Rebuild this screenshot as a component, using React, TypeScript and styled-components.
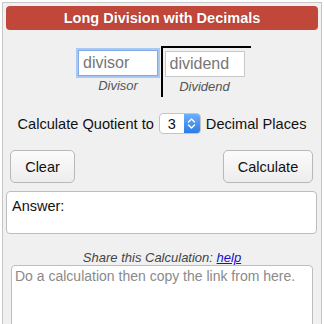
import React from "react";
import styled, { createGlobalStyle } from "styled-components";

const GlobalStyle = createGlobalStyle`
  html, body {
    margin: 0;
    padding: 0;
    background: #ffffff;
    font-family: "Liberation Sans", Arial, Helvetica, sans-serif;
  }
  * { box-sizing: border-box; }
`;

const Panel = styled.div`
  margin: 2px 0 0 2px;
  width: 320px;
  height: 330px;
  border: 1px solid #c6c6c6;
  background: #f0f0f0;
  display: flex;
  flex-direction: column;
  padding: 3px 3px 0 3px;
`;

const Header = styled.div`
  height: 26px;
  border-radius: 4px;
  background: #c0473a;
  color: #ffffff;
  font-weight: bold;
  font-size: 14.5px;
  display: flex;
  align-items: center;
  justify-content: center;
  text-shadow: 0 0 1px rgba(0, 0, 0, 0.25);
`;

const DivisionRow = styled.div`
  display: flex;
  justify-content: center;
  margin-top: 16px;
  padding-left: 2px;
`;

const DivisorCol = styled.div`
  display: flex;
  flex-direction: column;
  align-items: center;
  width: 85px;
  padding-top: 4px;
`;

const DividendCol = styled.div`
  display: flex;
  flex-direction: column;
  align-items: center;
  width: 90px;
  height: 51px;
  border-top: 2px solid #000;
  border-left: 2px solid #000;
  padding: 3px 4px 0 0;
`;

const NumberInput = styled.input<{ $focused?: boolean }>`
  width: 80px;
  height: 26px;
  border: 1px solid ${(p) => (p.$focused ? "#7fa9e2" : "#c8c8c8")};
  box-shadow: ${(p) => (p.$focused ? "0 0 0 2px #a9c9f2" : "none")};
  background: #fff;
  font-family: "Liberation Sans", Arial, sans-serif;
  font-size: 16px;
  padding: 0 4px;
  outline: none;
  &::placeholder { color: #767676; }
`;

const InputLabel = styled.div`
  font-style: italic;
  font-size: 13px;
  color: #555;
  line-height: 15px;
  margin-top: 2px;
`;

const QuotientRow = styled.div`
  display: flex;
  justify-content: center;
  align-items: center;
  gap: 5px;
  margin-top: 16px;
  height: 21px;
  font-size: 14.6px;
  color: #111;
`;

const Stepper = styled.div`
  display: flex;
  width: 42px;
  height: 21px;
  border: 1px solid #c4c4c4;
  border-radius: 4px;
  overflow: hidden;
  background: #fff;
`;

const StepperValue = styled.div`
  flex: 1;
  display: flex;
  align-items: center;
  justify-content: center;
  font-size: 14.5px;
`;

const StepperArrows = styled.div`
  width: 16px;
  background: linear-gradient(#6cb0fb, #2c7ce6);
  display: flex;
  align-items: center;
  justify-content: center;
`;

const ButtonRow = styled.div`
  display: flex;
  justify-content: space-between;
  margin-top: 16px;
  padding: 0 5px 0 4px;
`;

const Button = styled.button<{ $width: number }>`
  width: ${(p) => p.$width}px;
  height: 33px;
  border: 1px solid #b8b8b8;
  border-radius: 5px;
  background: linear-gradient(#fbfbfb, #ededed);
  font-family: "Liberation Sans", Arial, sans-serif;
  font-size: 14.5px;
  color: #111;
  padding: 0;
`;

const AnswerBox = styled.div`
  margin-top: 8px;
  height: 44px;
  width: 311px;
  border: 1px solid #bdbdbd;
  border-radius: 4px;
  background: #fff;
  padding: 6px 5px;
  font-size: 14.5px;
  color: #111;
`;

const ShareLine = styled.div`
  margin-top: 17px;
  text-align: center;
  font-style: italic;
  font-size: 13px;
  color: #444;
  line-height: 14px;
`;

const HelpLink = styled.a`
  color: #1a0dcc;
  text-decoration: underline;
`;

const ShareArea = styled.textarea`
  margin: 0 0 0 5px;
  width: 302px;
  height: 70px;
  border: 1px solid #bdbdbd;
  border-radius: 4px;
  background: #fff;
  resize: none;
  font-family: "Liberation Sans", Arial, sans-serif;
  font-size: 14px;
  padding: 2px 3px;
  &::placeholder { color: #8a8a8a; }
`;

const Chevrons = () => (
  <svg width="9" height="13" viewBox="0 0 9 13">
    <path d="M1.5 5 L4.5 2 L7.5 5" fill="none" stroke="#fff" strokeWidth="1.4" strokeLinecap="round" strokeLinejoin="round" />
    <path d="M1.5 8 L4.5 11 L7.5 8" fill="none" stroke="#fff" strokeWidth="1.4" strokeLinecap="round" strokeLinejoin="round" />
  </svg>
);

export default function App() {
  return (
    <>
      <GlobalStyle />
      <Panel>
        <Header>Long Division with Decimals</Header>
        <DivisionRow>
          <DivisorCol>
            <NumberInput $focused placeholder="divisor" />
            <InputLabel>Divisor</InputLabel>
          </DivisorCol>
          <DividendCol>
            <NumberInput placeholder="dividend" />
            <InputLabel>Dividend</InputLabel>
          </DividendCol>
        </DivisionRow>
        <QuotientRow>
          <span>Calculate Quotient to</span>
          <Stepper>
            <StepperValue>3</StepperValue>
            <StepperArrows>
              <Chevrons />
            </StepperArrows>
          </Stepper>
          <span>Decimal Places</span>
        </QuotientRow>
        <ButtonRow>
          <Button $width={65}>Clear</Button>
          <Button $width={90}>Calculate</Button>
        </ButtonRow>
        <AnswerBox>Answer:</AnswerBox>
        <ShareLine>
          Share this Calculation: <HelpLink href="#">help</HelpLink>
        </ShareLine>
        <ShareArea placeholder="Do a calculation then copy the link from here." />
      </Panel>
    </>
  );
}
